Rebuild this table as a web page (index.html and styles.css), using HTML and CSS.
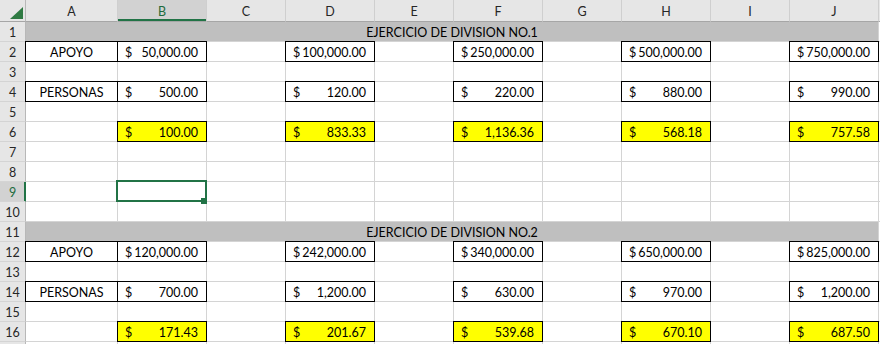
FILE: index.html
```html
<!DOCTYPE html>
<html lang="es">
<head>
    <meta charset="UTF-8">
    <meta name="viewport" content="width=device-width, initial-scale=1.0">
    <title>Ejercicio de division</title>
    <link rel="stylesheet" href="styles.css">
</head>
<body>
    <div class="sheet" id="sheet">
        <div class="corner">
            <svg width="13" height="12" viewBox="0 0 13 12"><polygon points="13,0 13,12 0,12" fill="#2f7a43"/></svg>
        </div>
        <div class="col-head">A</div>
        <div class="col-head sel">B</div>
        <div class="col-head">C</div>
        <div class="col-head">D</div>
        <div class="col-head">E</div>
        <div class="col-head">F</div>
        <div class="col-head">G</div>
        <div class="col-head">H</div>
        <div class="col-head">I</div>
        <div class="col-head">J</div>
        <div class="col-head"></div>
    </div>

    <script>
        // filas con contenido; las demas quedan vacias
        const datos = {
            1:  { titulo: 'EJERCICIO DE DIVISION NO.1' },
            2:  { etiqueta: 'APOYO', valores: ['50,000.00', '100,000.00', '250,000.00', '500,000.00', '750,000.00'] },
            4:  { etiqueta: 'PERSONAS', valores: ['500.00', '120.00', '220.00', '880.00', '990.00'] },
            6:  { valores: ['100.00', '833.33', '1,136.36', '568.18', '757.58'], amarillo: true },
            11: { titulo: 'EJERCICIO DE DIVISION NO.2' },
            12: { etiqueta: 'APOYO', valores: ['120,000.00', '242,000.00', '340,000.00', '650,000.00', '825,000.00'] },
            14: { etiqueta: 'PERSONAS', valores: ['700.00', '1,200.00', '630.00', '970.00', '1,200.00'] },
            16: { valores: ['171.43', '201.67', '539.68', '670.10', '687.50'], amarillo: true }
        };
        const filaSel = 9;   // celda activa B9
        const colSel = 1;
        const totalFilas = 17; // la 17 apenas asoma por abajo

        const sheet = document.getElementById('sheet');

        function celda(clase, html) {
            const div = document.createElement('div');
            div.className = clase;
            if (html) div.innerHTML = html;
            sheet.appendChild(div);
            return div;
        }

        for (let r = 1; r <= totalFilas; r++) {
            celda('row-head' + (r === filaSel ? ' sel' : ''), r < totalFilas ? String(r) : '');
            const fila = datos[r] || {};

            if (fila.titulo) {
                celda('cell band', fila.titulo);
                celda('cell');
                continue;
            }

            for (let c = 0; c < 10; c++) {
                if (c === 0) {
                    celda('cell label' + (fila.etiqueta ? ' bx' : ''), fila.etiqueta || '');
                } else if (c % 2 === 1 && fila.valores) {
                    const v = fila.valores[(c - 1) / 2];
                    celda('cell money bx' + (fila.amarillo ? ' yellow' : ''),
                        `<span>$</span><span>${v}</span>`);
                } else {
                    const div = celda('cell');
                    if (r === filaSel && c === colSel) {
                        div.classList.add('active');
                        div.innerHTML = '<div class="sel-box"></div><div class="handle"></div>';
                    }
                }
            }
            celda('cell');
        }
    </script>
</body>
</html>
```

FILE: styles.css
```css
body {
    margin: 0;
    height: 344px;
    overflow: hidden;
    background: white;
}
.sheet {
    display: grid;
    grid-template-columns: 26px 92px 89px 79px 89px 79px 89px 79px 89px 79px 89px 1fr;
    grid-template-rows: 22px repeat(17, 20px);
    width: 880px;
    font-family: Lato, "Liberation Sans", sans-serif;
    font-size: 12.5px;
    color: #000;
}
.corner {
    background: #e6e6e6;
    border-right: 1px solid #b8b8b8;
    border-bottom: 1px solid #a6a6a6;
    box-sizing: border-box;
    display: flex;
    align-items: flex-end;
    justify-content: flex-end;
    padding: 0 2px 2px 0;
}
.corner svg {
    display: block;
}
.col-head {
    background: #e6e6e6;
    border-right: 1px solid #cfcfcf;
    border-bottom: 1px solid #a6a6a6;
    box-sizing: border-box;
    display: flex;
    align-items: center;
    justify-content: center;
    color: #262626;
    padding-top: 2px;
}
.col-head.sel {
    background: #d2d2d2;
    color: #1d6b3d;
    box-shadow: inset 0 -2px 0 #217346;
}
.row-head {
    background: #e6e6e6;
    border-right: 1px solid #b8b8b8;
    border-bottom: 1px solid #d4d4d4;
    box-sizing: border-box;
    display: flex;
    align-items: center;
    justify-content: center;
    color: #262626;
    padding-top: 1px;
}
.row-head.sel {
    background: #d2d2d2;
    color: #1d6b3d;
    border-right-color: #217346;
    box-shadow: inset -1px 0 0 #217346;
}
.cell {
    border-right: 1px solid #d4d4d4;
    border-bottom: 1px solid #d4d4d4;
    box-sizing: border-box;
    display: flex;
    align-items: center;
    white-space: nowrap;
    padding: 1px 7px 0;
}
.label {
    justify-content: center;
}
.money {
    justify-content: space-between;
    padding: 1px 8px 0 7px;
}
.band {
    grid-column: span 10;
    background: #bfbfbf;
    justify-content: center;
}
.yellow {
    background: #ffff00;
}
/* borde negro completo: derecha/abajo propios, izquierda/arriba sobre la linea vecina */
.bx {
    border-right-color: #000;
    border-bottom-color: #000;
    box-shadow: -1px 0 0 #000, 0 -1px 0 #000, -1px -1px 0 #000;
}
.active {
    position: relative;
    overflow: visible;
}
.sel-box {
    position: absolute;
    top: -2px;
    left: -2px;
    right: -1px;
    bottom: -1px;
    border: 2px solid #217346;
}
.handle {
    position: absolute;
    right: -1px;
    bottom: -3px;
    width: 6px;
    height: 6px;
    background: #217346;
    z-index: 2;
}
```
